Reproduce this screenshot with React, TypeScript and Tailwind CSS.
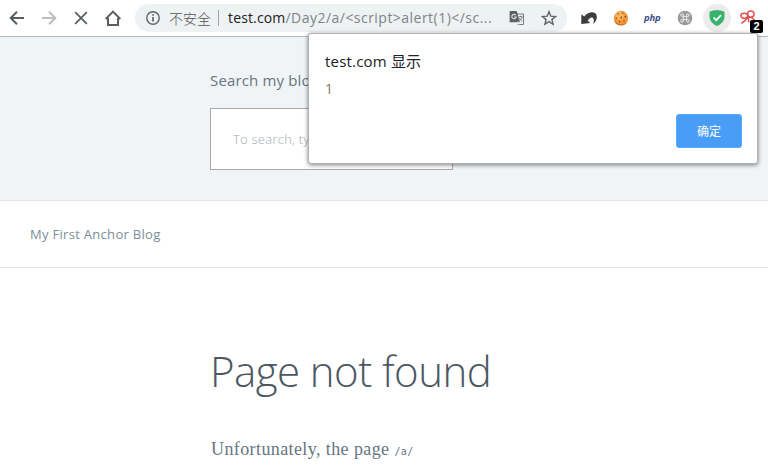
import React from 'react';

const SANS = "font-['Open_Sans','Noto_Sans_CJK_SC',sans-serif]";

function NavigationIcons() {
  return (
    <div className="flex items-center pl-[9px] text-[#5a5e63]">
      <svg className="h-4 w-4" viewBox="0 0 16 16" fill="none" stroke="currentColor" strokeWidth="2">
        <path d="M15 8H2.2M8 1.7 1.7 8 8 14.3" />
      </svg>
      <svg className="ml-[16px] h-4 w-4 text-[#bcbec0]" viewBox="0 0 16 16" fill="none" stroke="currentColor" strokeWidth="2">
        <path d="M1 8h12.8M8 1.7 14.3 8 8 14.3" />
      </svg>
      <svg className="ml-[16px] h-4 w-4" viewBox="0 0 16 16" fill="none" stroke="currentColor" strokeWidth="1.8">
        <path d="m2.2 2.2 11.6 11.6M13.8 2.2 2.2 13.8" />
      </svg>
      <svg className="ml-[16px] h-4 w-4" viewBox="0 0 16 16" fill="none" stroke="currentColor" strokeWidth="2">
        <path d="M.7 9 8 1.6 15.3 9M3 8v7h10V8" />
      </svg>
    </div>
  );
}

function TranslateIcon() {
  return (
    <svg className="h-4 w-4" viewBox="0 0 16 16">
      <path d="M7 4h7.5v10.5H8.2" fill="#eef2f3" stroke="#777b80" />
      <path d="M1.5 1h6.2l3.2 11.3H1.5Q.6 12.3.6 11.4V1.9Q.6 1 1.5 1Z" fill="#5c6066" />
      <path d="M6.8 5.2A2.2 2.2 0 1 0 7.2 7H5.2M8.2 12.3h2.7l-2 2.5" fill="none" stroke="#dfe3e5" strokeWidth="1.1" />
      <path d="M9.7 6.7h4M11.6 5.8v1M13 7c-.4 2-1.5 3-2.7 4.1M10.4 8c.7 1.6 1.7 2.7 2.8 3.3" fill="none" stroke="#6d7176" strokeWidth=".9" />
    </svg>
  );
}

function AddressBar() {
  return (
    <div className="ml-[14px] flex h-7 w-[432px] shrink-0 items-center rounded-full bg-[#eef2f3] pl-[11px]">
      <svg className="h-[14px] w-[14px] shrink-0" viewBox="0 0 14 14" fill="none" stroke="#5f6368" strokeWidth="1.4">
        <circle cx="7" cy="7" r="6.2" />
        <path d="M7 6v4.5M7 3.3v1.5" strokeWidth="1.7" />
      </svg>
      <span className="ml-[9px] w-[42px] shrink-0 whitespace-nowrap font-['Noto_Sans_CJK_SC',sans-serif] text-[14px] font-light leading-[26px] text-[#4f5358]">不安全</span>
      <span className="ml-[7px] h-4 w-px shrink-0 bg-[#9ea2a5]" />
      <span className="ml-[9px] w-[266px] shrink-0 whitespace-nowrap text-[14px] leading-7 tracking-[0.47px] text-[#7c8488]">
        <span className="tracking-[0.15px] text-[#202124]">test.com</span>/Day2/a/&lt;script&gt;alert(1)&lt;/sc...
      </span>
      <span className="ml-[15px] shrink-0"><TranslateIcon /></span>
      <svg className="ml-[16px] h-4 w-4 shrink-0" viewBox="0 0 16 16" fill="none" stroke="#5f6368" strokeWidth="1.4">
        <path d="m8 1.7 1.8 4.5 4.8.3-3.7 3.1 1.2 4.7L8 11.7l-4.1 2.6 1.2-4.7-3.7-3.1 4.8-.3Z" />
      </svg>
    </div>
  );
}

function Extensions() {
  return (
    <div className="flex items-center">
      <svg className="ml-[14px] h-4 w-4" viewBox="0 0 16 16">
        <path d="M.4 4.2.2 14l9.200-.9-2.700-2.300C8 8.300 10.300 6.700 12 8c1.200.9 1 3.300.1 6 2.600-2 4-5.200 3.700-7.800C15.300 1 8 .8 3.200 6.400Z" fill="#3d3d3d" />
      </svg>
      <svg className="ml-[16px] h-4 w-4" viewBox="0 0 16 16">
        <circle cx="8" cy="8" r="7.2" fill="#f29a3c" />
        <path d="M1 9.5a7 7 0 0 0 13.5 1.5A8 8 0 0 1 1 9.5" fill="#d77225" />
        <circle cx="6.6" cy="5.8" r="4" fill="#fab65a" />
        <g fill="#8d4a20">
          <circle cx="5" cy="4" r=".8" /><circle cx="9.7" cy="3.3" r=".7" /><circle cx="12.4" cy="6.7" r=".9" />
          <circle cx="8.2" cy="7.5" r=".9" /><circle cx="3.4" cy="8.3" r=".8" /><circle cx="6.5" cy="11.6" r=".8" /><circle cx="11" cy="11" r=".8" />
        </g>
      </svg>
      <span className="ml-[15px] w-4 text-[9.5px] font-bold italic leading-4 tracking-[-0.2px] text-[#3d4f8a]">php</span>
      <svg className="ml-[17px] h-4 w-4" viewBox="0 0 16 16">
        <circle cx="8" cy="8" r="7.3" fill="#9a9a9a" />
        <path d="M6.4 6.4h3.2v3.2H6.4ZM6.4 6.4H5.2a1.3 1.3 0 1 1 1.2-1.2ZM9.6 6.4V5.2a1.3 1.3 0 1 1 1.2 1.2ZM9.6 9.6h1.2a1.3 1.3 0 1 1-1.2 1.2ZM6.4 9.6v1.2a1.3 1.3 0 1 1-1.2-1.2Z" fill="none" stroke="#f0f0f0" strokeWidth=".9" />
      </svg>
      <span className="ml-[10px] flex h-7 w-7 items-center justify-center rounded-full bg-[#ececec]">
        <svg className="h-4 w-4" viewBox="0 0 16 16">
          <path d="M8 0c2.2.2 5 .7 7.5 1.7v4.8C15.5 10.3 12.8 14 8 16 3.2 14 .5 10.3.5 6.5V1.7C3 .7 5.8.2 8 0Z" fill="#37b36e" />
          <path d="m4.5 7.5 2.7 2.7 4.8-5" fill="none" stroke="#fff" strokeWidth="1.7" />
        </svg>
      </span>
      <span className="relative ml-[9px] h-4 w-4">
        <svg className="h-4 w-4" viewBox="0 0 16 16" fill="none" stroke="#e3524d" strokeWidth="1.5">
          <ellipse cx="4.3" cy="5.8" rx="3.4" ry="2.5" />
          <circle cx="10.8" cy="4.1" r="3.2" />
          <path d="M7.2 6.8C6.5 9.500 4.500 11.700 1.300 13.300M7.400 7c1.200 1.800 1.600 3.500 1.300 5.500M8.500 7.300c2.300-.2 4.500.8 6 2.700" />
        </svg>
        <span className="absolute left-[10px] top-[10px] flex h-[13px] w-[13px] items-center justify-center rounded-[2px] bg-black font-['Liberation_Sans',sans-serif] text-[11px] font-bold leading-none text-white">2</span>
      </span>
    </div>
  );
}

function AlertDialog() {
  return (
    <div role="dialog" className="absolute left-[308px] top-[33px] z-10 flex h-[131px] w-[450px] flex-col rounded-[3px] border border-[#aeb1b3] bg-white px-4 shadow-[0_1px_4px_rgba(0,0,0,0.5)]">
      <h2 className="mt-[15px] whitespace-nowrap text-[15px] leading-6 tracking-[0.2px] text-[#202124]">test.com <span className="font-['Noto_Sans_CJK_SC',sans-serif] tracking-normal">显示</span></h2>
      <p className="mt-[6px] text-[14px] leading-5 text-[#8c7461]">1</p>
      <button className="mb-[15px] mr-[-1px] mt-auto flex h-[34px] w-[66px] items-center justify-center self-end rounded-[3px] border border-[#55adfa] bg-[#4a9df7] pt-[2px] text-[12px] text-white">确定</button>
    </div>
  );
}

export default function App() {
  return (
    <div className={`relative h-[473px] w-[768px] overflow-hidden bg-white ${SANS}`}>
      <div className="flex h-[37px] items-center border-b border-[#b5b7b9] bg-white">
        <NavigationIcons />
        <AddressBar />
        <Extensions />
      </div>
      <section className="h-[164px] border-b border-[#e2e6e9] bg-[#f0f4f7] pl-[210px] pt-[31px]">
        <label className="block whitespace-nowrap text-[15px] leading-6 tracking-[0.15px] text-[#66757f]">Search my blog</label>
        <div className="mt-[16px] flex h-[62px] w-[243px] items-center border border-[#a9a9a9] bg-white pl-[22px] pt-px">
          <span className="whitespace-nowrap text-[13px] font-light tracking-[0.25px] text-[#a3abb4]">To search, type</span>
        </div>
      </section>
      <header className="flex h-[67px] items-center border-b border-[#e5e8ea] pl-[30px] pt-px">
        <span className="whitespace-nowrap text-[13px] tracking-[0.3px] text-[#7c8d99]">My First Anchor Blog</span>
      </header>
      <main className="pl-[210px] pt-[72px]">
        <h1 className="whitespace-nowrap text-[42px] font-light leading-[62px] tracking-[-0.55px] text-[#4c5864]">Page not found</h1>
        <p className="mt-[32px] whitespace-nowrap pl-px font-['Liberation_Serif',serif] text-[18px] leading-[30px] tracking-[0.4px] text-[#66757f]">
          Unfortunately, the page <code className="font-['DejaVu_Sans_Mono',monospace] text-[10px]">/a/</code>
        </p>
      </main>
      <AlertDialog />
    </div>
  );
}
